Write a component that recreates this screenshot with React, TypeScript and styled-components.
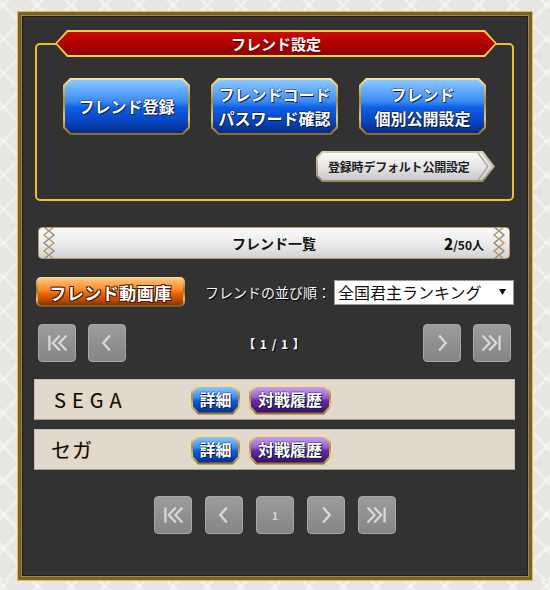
import React from 'react';
import styled, { createGlobalStyle } from 'styled-components';

const GlobalStyle = createGlobalStyle`
  body {
    margin: 0;
    background-color: #e8e6e3;
    background-image:
      repeating-linear-gradient(45deg, rgba(255, 255, 255, 0.4) 0 3px, transparent 3px 24px),
      repeating-linear-gradient(-45deg, rgba(255, 255, 255, 0.4) 0 3px, transparent 3px 24px);
    font-family: 'Noto Sans CJK JP', 'Noto Sans', sans-serif;
  }
`;

const Frame = styled.div`
  box-sizing: border-box;
  width: 516px;
  height: 570px;
  margin: 11px 0 0 17px;
  background: #323232;
  border: 1px solid #e2c24c;
  box-shadow: inset 0 0 0 3px #7a602c, inset 0 0 0 4px #a8883a, inset 0 0 0 5px #1e1e1e;
  padding: 4px;
  display: flex;
  flex-direction: column;
`;

const SettingsBox = styled.section`
  position: relative;
  margin: 27px 14px 0 13px;
  border: 2px solid #e6c229;
  border-radius: 5px;
  padding: 33px 0 17px;
  display: flex;
  flex-direction: column;
`;

const RibbonEdge = styled.div`
  position: absolute;
  top: -15px;
  left: 18px;
  right: 15px;
  height: 27px;
  background: #f2d23a;
  clip-path: polygon(12px 0, calc(100% - 12px) 0, 100% 50%, calc(100% - 12px) 100%, 12px 100%, 0 50%);
  padding: 2px;
  box-sizing: border-box;
`;

const RibbonFace = styled.div`
  height: 100%;
  background: linear-gradient(#c80c0c 0%, #b00000 50%, #8c0000 100%);
  clip-path: polygon(11px 0, calc(100% - 11px) 0, 100% 50%, calc(100% - 11px) 100%, 11px 100%, 0 50%);
  display: flex;
  align-items: center;
  justify-content: center;
  color: #fff;
  font-weight: 700;
  font-size: 15px;
  text-shadow: 0 1px 1px #400;
`;

const BigButtons = styled.div`
  display: flex;
  justify-content: center;
  gap: 21px;
`;

const octagon = `polygon(7px 0, calc(100% - 7px) 0, 100% 7px, 100% calc(100% - 7px), calc(100% - 7px) 100%, 7px 100%, 0 calc(100% - 7px), 0 7px)`;

const GoldFrame = styled.div<{ w: number; h: number }>`
  width: ${(p) => p.w}px;
  height: ${(p) => p.h}px;
  padding: 2px;
  box-sizing: border-box;
  background: linear-gradient(#f6e6a0, #b48a2e 40%, #e8c860 70%, #8a6420);
  clip-path: ${octagon};
  flex: none;
`;

const faces = {
  blue: 'linear-gradient(#8cc8ff 0%, #3a8cf6 40%, #0d5fe6 52%, #0848c8 75%, #052c86 100%)',
  purple: 'linear-gradient(#c8a0f0 0%, #9560d0 40%, #6a2aa8 52%, #52208a 75%, #2e0e58 100%)',
  orange: 'linear-gradient(#ffc07a 0%, #ff8a24 42%, #e86800 55%, #c04c00 80%, #8a3000 100%)',
};

const Face = styled.div<{ tone: keyof typeof faces; size: number }>`
  height: 100%;
  background: ${(p) => faces[p.tone]};
  clip-path: polygon(6px 0, calc(100% - 6px) 0, 100% 6px, 100% calc(100% - 6px), calc(100% - 6px) 100%, 6px 100%, 0 calc(100% - 6px), 0 6px);
  display: flex;
  flex-direction: column;
  align-items: center;
  justify-content: center;
  text-align: center;
  color: #fff;
  font-weight: 700;
  font-size: ${(p) => p.size}px;
  line-height: 1.45;
  white-space: nowrap;
  text-shadow: 1px 1px 0 #0a1a40, -1px 0 0 rgba(0, 0, 0, 0.4), 0 -1px 0 rgba(0, 0, 0, 0.3);
`;

const DefaultRow = styled.div`
  display: flex;
  justify-content: flex-end;
  padding-right: 17px;
  margin-top: 16px;
`;

const DefaultEdge = styled.div`
  width: 179px;
  height: 31px;
  padding: 2px;
  box-sizing: border-box;
  background: linear-gradient(#d8cfae, #9a8a62);
  clip-path: polygon(6px 0, calc(100% - 12px) 0, 100% 50%, calc(100% - 12px) 100%, 6px 100%, 0 calc(100% - 6px), 0 6px);
`;

const DefaultFace = styled.div`
  position: relative;
  height: 100%;
  background: linear-gradient(#fbfbfb, #e4e4e4 55%, #c8c8c8);
  clip-path: polygon(5px 0, calc(100% - 11px) 0, 100% 50%, calc(100% - 11px) 100%, 5px 100%, 0 calc(100% - 5px), 0 5px);
  display: flex;
  align-items: center;
  padding-left: 10px;
  color: #222;
  font-weight: 700;
  font-size: 12px;
  letter-spacing: -0.2px;
`;

const Chevrons = styled.svg`
  position: absolute;
  right: 0;
  top: 0;
`;

const ListHeader = styled.div`
  position: relative;
  margin: 26px 18px 0 16px;
  height: 32px;
  box-sizing: border-box;
  background: linear-gradient(#fafafa, #ececec 50%, #d2d2d2);
  border: 1px solid #b49a64;
  border-radius: 4px;
  display: grid;
  grid-template-columns: 1fr auto 1fr;
  align-items: center;
  padding: 0 24px;
`;

const HeaderTitle = styled.div`
  font-weight: 700;
  font-size: 14px;
  color: #111;
`;

const HeaderCount = styled.div`
  justify-self: end;
  font-weight: 700;
  font-size: 12px;
  color: #111;
  padding-right: 1px;
  b {
    font-size: 15px;
  }
`;

const Ornament = styled.svg<{ side: 'left' | 'right' }>`
  position: absolute;
  top: -1px;
  ${(p) => p.side}: 2px;
`;

const SortRow = styled.div`
  display: flex;
  align-items: center;
  margin: 18px 14px 0 14px;
`;

const OrangeEdge = styled.div`
  width: 149px;
  height: 30px;
  padding: 2px;
  box-sizing: border-box;
  border-radius: 5px;
  background: linear-gradient(#f3e1a0, #9c7428 45%, #e6c460 75%, #6e4e18);
`;

const OrangeFace = styled.div`
  height: 100%;
  border-radius: 4px;
  background: ${faces.orange};
  display: flex;
  align-items: center;
  justify-content: center;
  color: #fff;
  font-weight: 700;
  font-size: 17px;
  letter-spacing: 0.5px;
  text-shadow: 1px 1px 0 #4a1800, -1px -1px 0 #4a1800, 1px -1px 0 #4a1800, -1px 1px 0 #4a1800;
`;

const SortLabel = styled.span`
  margin-left: 20px;
  color: #f2f2f2;
  font-size: 14px;
  text-shadow: 1px 1px 1px #000;
`;

const SelectBox = styled.div`
  margin-left: auto;
  width: 180px;
  height: 25px;
  box-sizing: border-box;
  background: #fff;
  border: 1px solid #9a9a9a;
  display: flex;
  align-items: center;
  justify-content: space-between;
  padding: 0 7px 0 3px;
  font-size: 16px;
  color: #111;
`;

const PagerRow = styled.div`
  display: grid;
  grid-template-columns: 1fr auto 1fr;
  align-items: center;
  margin: 17px 17px 0 16px;
`;

const PagerGroup = styled.div<{ end?: boolean }>`
  display: flex;
  gap: 12px;
  justify-content: ${(p) => (p.end ? 'flex-end' : 'flex-start')};
`;

const PageInfo = styled.div`
  color: #fff;
  font-weight: 700;
  font-size: 12px;
  letter-spacing: 1px;
  text-shadow: 1px 1px 0 #000;
`;

const PageButton = styled.div`
  width: 38px;
  height: 38px;
  box-sizing: border-box;
  border-radius: 4px;
  border: 1px solid #a8a8a8;
  background: linear-gradient(#9c9c9c, #858585);
  display: flex;
  align-items: center;
  justify-content: center;
  color: #d6d6d6;
  font-weight: 700;
  font-size: 11px;
`;

const FriendList = styled.div`
  display: flex;
  flex-direction: column;
  gap: 9px;
  margin: 17px 13px 0 12px;
`;

const FriendRow = styled.div`
  height: 41px;
  box-sizing: border-box;
  background: #e2d8cc;
  border: 1px solid #c8bcae;
  border-bottom-color: #a89c8e;
  display: flex;
  align-items: center;
  padding-left: 16px;
`;

const FriendName = styled.div<{ spaced?: boolean }>`
  box-sizing: border-box;
  width: 140px;
  flex: none;
  font-size: 20px;
  letter-spacing: ${(p) => (p.spaced ? 6 : 1)}px;
  padding-left: ${(p) => (p.spaced ? 3 : 0)}px;
  color: #0c0c0c;
  text-shadow: 0 0 1px #e0a060;
`;

const RowButtons = styled.div`
  display: flex;
  gap: 9px;
`;

const BottomPager = styled.div`
  display: flex;
  justify-content: center;
  gap: 13px;
  margin-top: 26px;
`;

type IconKind = 'first' | 'prev' | 'next' | 'last';

const PagerIcon = ({ kind }: { kind: IconKind }) => {
  const paths: Record<IconKind, string> = {
    first: 'M11 11 L11 27 M22 11 L14.5 19 L22 27 M29 11 L21.5 19 L29 27',
    prev: 'M22 11 L15 19 L22 27',
    next: 'M16 11 L23 19 L16 27',
    last: 'M9 11 L16.5 19 L9 27 M16 11 L23.5 19 L16 27 M27 11 L27 27',
  };
  return (
    <svg width="38" height="38" viewBox="0 0 38 38">
      <path d={paths[kind]} fill="none" stroke="#d8d8d8" strokeWidth="2.4" />
    </svg>
  );
};

const DiamondChain = ({ side }: { side: 'left' | 'right' }) => (
  <Ornament side={side} width="16" height="32" viewBox="0 0 16 32">
    <path d="M3 0 L13 8 L3 16 L13 24 L3 32" fill="none" stroke="#8a8a8a" strokeWidth="1.4" />
    <path d="M13 0 L3 8 L13 16 L3 24 L13 32" fill="none" stroke="#b89a5a" strokeWidth="1.4" />
  </Ornament>
);

const GoldButton = ({
  w,
  h,
  tone,
  size,
  children,
}: {
  w: number;
  h: number;
  tone: keyof typeof faces;
  size: number;
  children: React.ReactNode;
}) => (
  <GoldFrame w={w} h={h}>
    <Face tone={tone} size={size}>
      {children}
    </Face>
  </GoldFrame>
);

const friends = [
  { name: 'SEGA', spaced: true },
  { name: 'セガ', spaced: false },
];

export default function App() {
  return (
    <>
      <GlobalStyle />
      <Frame>
        <SettingsBox>
          <RibbonEdge>
            <RibbonFace>フレンド設定</RibbonFace>
          </RibbonEdge>
          <BigButtons>
            <GoldButton w={127} h={57} tone="blue" size={16}>
              フレンド登録
            </GoldButton>
            <GoldButton w={127} h={57} tone="blue" size={16}>
              <span>フレンドコード</span>
              <span>パスワード確認</span>
            </GoldButton>
            <GoldButton w={127} h={57} tone="blue" size={16}>
              <span>フレンド</span>
              <span>個別公開設定</span>
            </GoldButton>
          </BigButtons>
          <DefaultRow>
            <DefaultEdge>
              <DefaultFace>
                登録時デフォルト公開設定
                <Chevrons width="16" height="27" viewBox="0 0 16 27">
                  <path d="M1 0 L11 13.5 L1 27" fill="none" stroke="#a8a8a8" strokeWidth="1.5" />
                  <path d="M5 0 L15 13.5 L5 27" fill="none" stroke="#c8c8c8" strokeWidth="1.5" />
                </Chevrons>
              </DefaultFace>
            </DefaultEdge>
          </DefaultRow>
        </SettingsBox>

        <ListHeader>
          <DiamondChain side="left" />
          <span />
          <HeaderTitle>フレンド一覧</HeaderTitle>
          <HeaderCount>
            <b>2</b>/50人
          </HeaderCount>
          <DiamondChain side="right" />
        </ListHeader>

        <SortRow>
          <OrangeEdge>
            <OrangeFace>フレンド動画庫</OrangeFace>
          </OrangeEdge>
          <SortLabel>フレンドの並び順：</SortLabel>
          <SelectBox>
            全国君主ランキング
            <svg width="7" height="6" viewBox="0 0 7 6">
              <path d="M0 0 L7 0 L3.5 6 Z" fill="#111" />
            </svg>
          </SelectBox>
        </SortRow>

        <PagerRow>
          <PagerGroup>
            <PageButton>
              <PagerIcon kind="first" />
            </PageButton>
            <PageButton>
              <PagerIcon kind="prev" />
            </PageButton>
          </PagerGroup>
          <PageInfo>【 1 / 1 】</PageInfo>
          <PagerGroup end>
            <PageButton>
              <PagerIcon kind="next" />
            </PageButton>
            <PageButton>
              <PagerIcon kind="last" />
            </PageButton>
          </PagerGroup>
        </PagerRow>

        <FriendList>
          {friends.map((f) => (
            <FriendRow key={f.name}>
              <FriendName spaced={f.spaced}>{f.name}</FriendName>
              <RowButtons>
                <GoldButton w={49} h={30} tone="blue" size={16}>
                  詳細
                </GoldButton>
                <GoldButton w={82} h={30} tone="purple" size={16}>
                  対戦履歴
                </GoldButton>
              </RowButtons>
            </FriendRow>
          ))}
        </FriendList>

        <BottomPager>
          <PageButton>
            <PagerIcon kind="first" />
          </PageButton>
          <PageButton>
            <PagerIcon kind="prev" />
          </PageButton>
          <PageButton>1</PageButton>
          <PageButton>
            <PagerIcon kind="next" />
          </PageButton>
          <PageButton>
            <PagerIcon kind="last" />
          </PageButton>
        </BottomPager>
      </Frame>
    </>
  );
}
